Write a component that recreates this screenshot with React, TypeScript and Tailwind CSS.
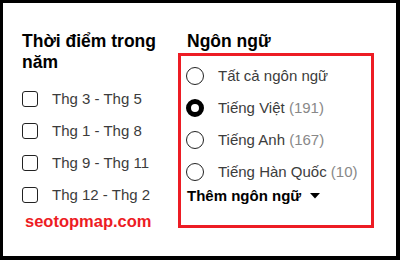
import React from "react";

const periods = ["Thg 3 - Thg 5", "Thg 1 - Thg 8", "Thg 9 - Thg 11", "Thg 12 - Thg 2"];

const languages = [
    { label: "Tất cả ngôn ngữ", count: null, checked: false },
    { label: "Tiếng Việt", count: 191, checked: true },
    { label: "Tiếng Anh", count: 167, checked: false },
    { label: "Tiếng Hàn Quốc", count: 10, checked: false },
];

export default function App() {
    return (
        <div
            className="w-[400px] h-[260px] bg-white border-black border-t-[3px] border-l-[3px] border-r-[4px] border-b-[4px] flex pl-[19px] pt-[28px]"
            style={{ fontFamily: '"Liberation Sans", Arial, sans-serif' }}
        >
            {/* Time of year */}
            <div className="w-[156px] flex flex-col">
                <h3 className="text-[17.5px] leading-[21px] font-bold text-black pr-4">Thời điểm trong năm</h3>
                <div className="mt-[10px] flex flex-col">
                    {periods.map((p) => (
                        <label key={p} className="h-8 flex items-center gap-[14px]">
                            <span className="w-4 h-4 border-[1.5px] border-[#222] rounded-[3px] shrink-0"></span>
                            <span className="text-[15px] text-[#3c3c3c]">{p}</span>
                        </label>
                    ))}
                </div>
                <div className="h-5 leading-5 pl-[3px] text-[16.5px] font-bold text-[#ed1c24]">seotopmap.com</div>
            </div>

            {/* Language */}
            <div className="w-[196px] flex flex-col">
                <h3 className="text-[17.5px] leading-[21px] font-bold text-black pl-[9px]">Ngôn ngữ</h3>
                <div className="mt-px border-[3px] border-[#ed1c24] pl-[5px] pt-[4px] pb-[21px]">
                    {languages.map((l) => (
                        <label key={l.label} className="h-8 flex items-center gap-[14px]">
                            {l.checked ? (
                                <span className="w-[18px] h-[18px] rounded-full border-[5px] border-black bg-white shrink-0"></span>
                            ) : (
                                <span className="w-[18px] h-[18px] rounded-full border-[1.5px] border-[#222] shrink-0"></span>
                            )}
                            <span className="text-[15px] text-[#3c3c3c] whitespace-nowrap">
                                {l.label}
                                {l.count !== null && <span className="text-[#888]"> ({l.count})</span>}
                            </span>
                        </label>
                    ))}
                    <div className="h-4 leading-4 flex items-center gap-[9px] pl-[1px]">
                        <span className="text-[15px] font-bold text-black">Thêm ngôn ngữ</span>
                        <svg width="10" height="6" viewBox="0 0 10 6">
                            <path d="M0 0 L10 0 L5 5.5 Z" fill="#000" />
                        </svg>
                    </div>
                </div>
            </div>
        </div>
    );
}
